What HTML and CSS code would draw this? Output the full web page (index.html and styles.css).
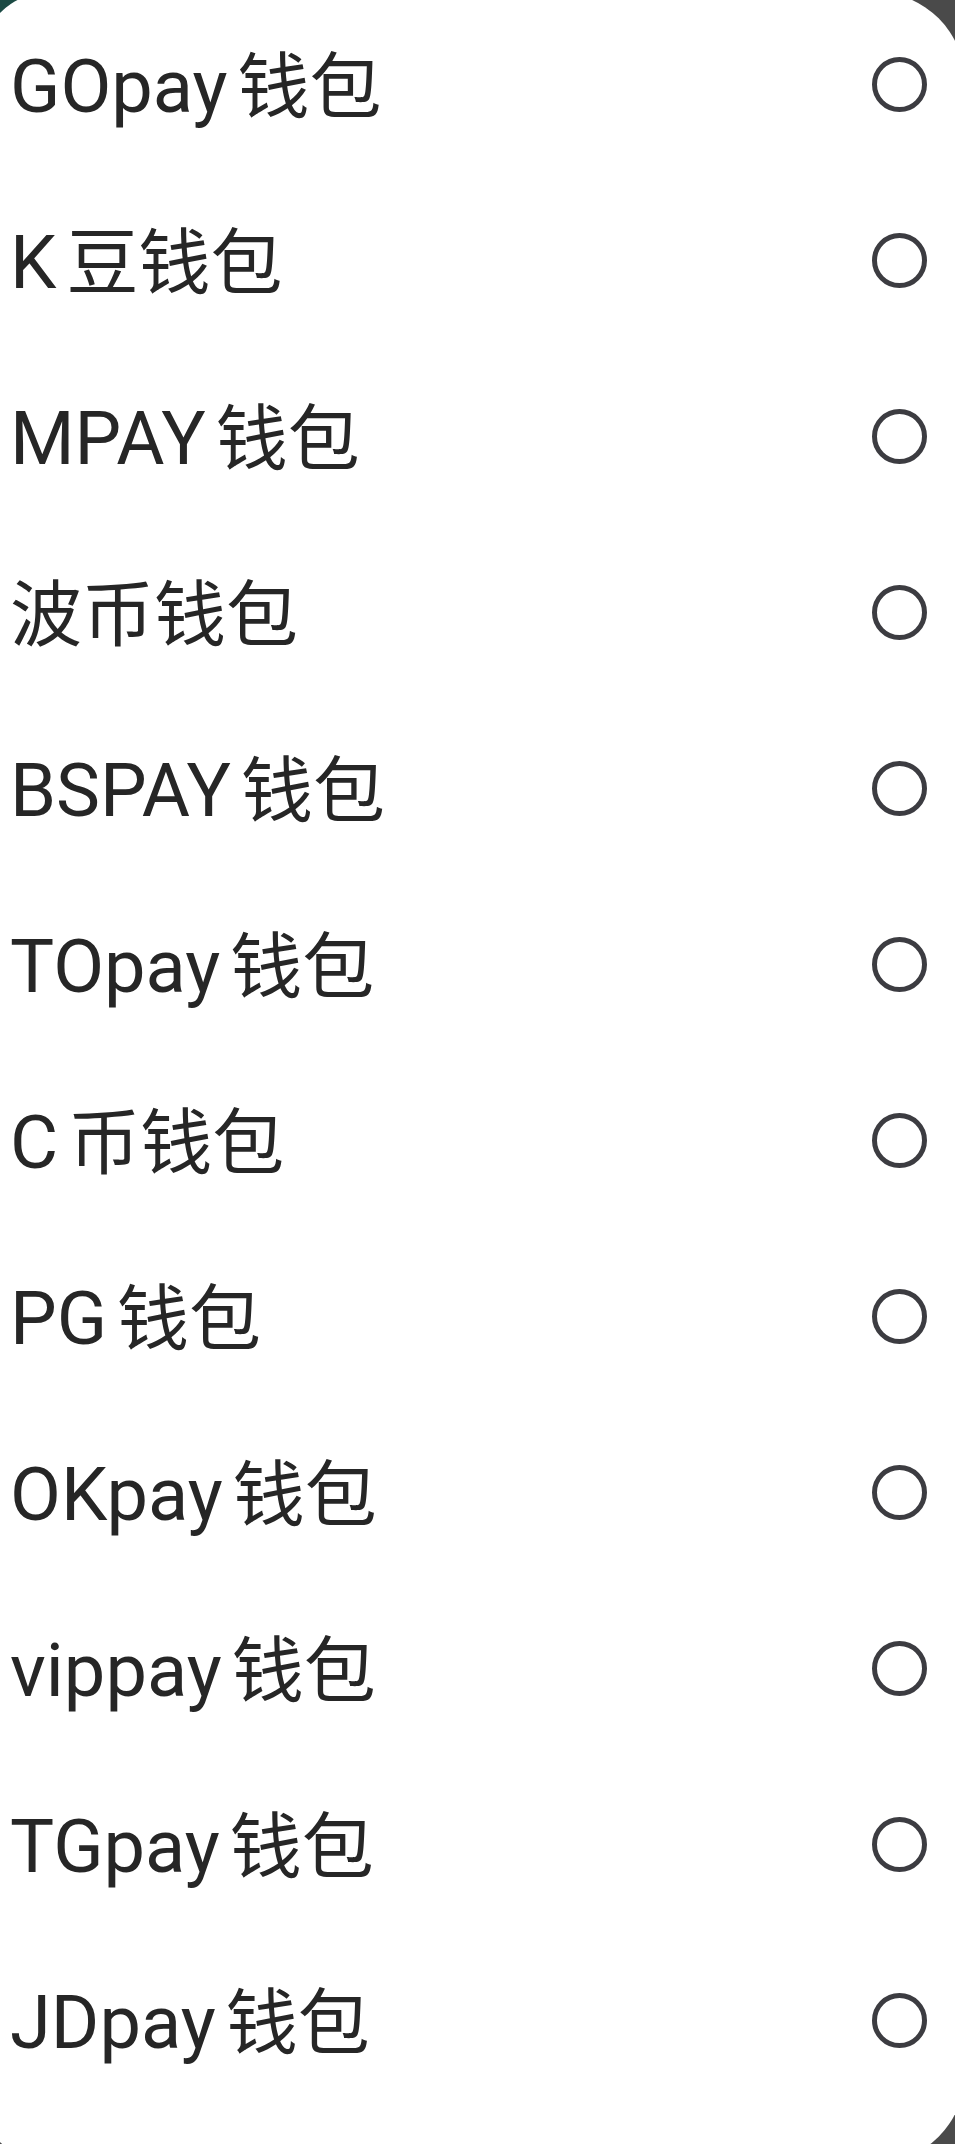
FILE: index.html
```html
<!DOCTYPE html>
<html lang="zh-CN">
<head>
  <meta charset="UTF-8" />
  <meta name="viewport" content="width=device-width, initial-scale=1.0" />
  <title>选择钱包</title>
  <link rel="stylesheet" href="styles.css">
</head>
<body>

  <div class="sheet">
    <ul class="wallets">
      <li class="wallet"><span class="name">GOpay<span class="cn">钱包</span></span><span class="radio"></span></li>
      <li class="wallet"><span class="name">K<span class="cn">豆钱包</span></span><span class="radio"></span></li>
      <li class="wallet"><span class="name">MPAY<span class="cn">钱包</span></span><span class="radio"></span></li>
      <li class="wallet"><span class="name"><span class="cn first">波币钱包</span></span><span class="radio"></span></li>
      <li class="wallet"><span class="name">BSPAY<span class="cn">钱包</span></span><span class="radio"></span></li>
      <li class="wallet"><span class="name">TOpay<span class="cn">钱包</span></span><span class="radio"></span></li>
      <li class="wallet"><span class="name">C<span class="cn">币钱包</span></span><span class="radio"></span></li>
      <li class="wallet"><span class="name">PG<span class="cn">钱包</span></span><span class="radio"></span></li>
      <li class="wallet"><span class="name">OKpay<span class="cn">钱包</span></span><span class="radio"></span></li>
      <li class="wallet"><span class="name">vippay<span class="cn">钱包</span></span><span class="radio"></span></li>
      <li class="wallet"><span class="name">TGpay<span class="cn">钱包</span></span><span class="radio"></span></li>
      <li class="wallet"><span class="name">JDpay<span class="cn">钱包</span></span><span class="radio"></span></li>
    </ul>
  </div>

</body>
</html>
```

FILE: styles.css
```css
:root {
  --fundo: #4a4a4a;
  --verde: #1b4a44;
  --texto: #262626;
  --radio: #3c3c41;
}

* {
  box-sizing: border-box;
}

body {
  margin: 0;
  min-height: 2144px;
  overflow: hidden;
  background-color: var(--fundo);
  background-image: linear-gradient(var(--verde), var(--verde));
  background-size: 60px 40px;
  background-repeat: no-repeat;
  font-family: Roboto, "Noto Sans CJK SC", sans-serif;
  color: var(--texto);
}

.sheet {
  width: 985px;
  height: 2171px;
  margin: -8px 0 0 -20px;
  background-color: #ffffff;
  border-radius: 70px 90px 90px 70px;
  padding: 4px 38px 0 30px;
}

.wallets {
  list-style: none;
  margin: 0;
  padding: 0;
}

.wallet {
  height: 176px;
  display: flex;
  align-items: center;
  justify-content: space-between;
}

.name {
  font-size: 74px;
  line-height: 1;
  white-space: nowrap;
}

.cn {
  font-family: "Noto Sans CJK SC", sans-serif;
  font-size: 72px;
  margin-left: 10px;
}

.cn.first {
  margin-left: 0;
}

.radio {
  width: 55px;
  height: 55px;
  border: 5px solid var(--radio);
  border-radius: 50%;
  flex-shrink: 0;
}
```
